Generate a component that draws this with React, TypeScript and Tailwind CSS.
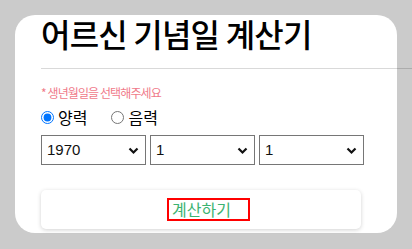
import React, { useState } from "react";

const Chevron = () => (
  <svg width="11" height="8" viewBox="0 0 11 8" className="pointer-events-none absolute right-[7px] top-[12px]">
    <path d="M1.5 1.5 L5.5 5.5 L9.5 1.5" fill="none" stroke="#111" strokeWidth="2.2" />
  </svg>
);

function Sel({ value, options }: { value: string; options: string[] }) {
  return (
    <div className="relative w-[105px] h-[30px]">
      <select
        defaultValue={value}
        className="appearance-none w-full h-full border border-[#767676] bg-white pl-[5px] text-[15px] outline-none text-[#111]"
        style={{ fontFamily: '"Liberation Sans", Arial, sans-serif' }}
      >
        {options.map((o) => (
          <option key={o}>{o}</option>
        ))}
      </select>
      <Chevron />
    </div>
  );
}

export default function App() {
  const [cal, setCal] = useState("solar");
  return (
    <div
      className="w-[412px] h-[249px] bg-[#cbcbcb] pt-[15px] pl-[15px] overflow-hidden"
      style={{ fontFamily: '"Noto Sans CJK KR", "Noto Sans", sans-serif' }}
    >
      <div className="w-[382px] h-[218px] bg-white rounded-[20px] pl-[26px] flex flex-col">
        <h1 className="text-[32px] leading-[32px] font-medium text-black mt-[2px] tracking-[-0.8px]">
          어르신 기념일 계산기
        </h1>
        <div className="w-[371px] h-px bg-black/15 mt-[19px] shrink-0" />
        <p className="text-[12px] leading-[14px] text-[#f07a8a] mt-[17px] tracking-[-0.9px]">
          * 생년월일을 선택해주세요
        </p>
        <div className="flex items-center mt-[7px] text-[16px] leading-[20px] text-black">
          <label className="flex items-center">
            <input
              type="radio"
              name="cal"
              checked={cal === "solar"}
              onChange={() => setCal("solar")}
              className="w-[13px] h-[13px] m-0 accent-[#0075ff]"
            />
            <span className="ml-[4px]">양력</span>
          </label>
          <label className="flex items-center ml-[24px]">
            <input
              type="radio"
              name="cal"
              checked={cal === "lunar"}
              onChange={() => setCal("lunar")}
              className="w-[13px] h-[13px] m-0"
            />
            <span className="ml-[4px]">음력</span>
          </label>
        </div>
        <div className="flex gap-[4px] mt-[8px]">
          <Sel value="1970" options={["1970", "1971"]} />
          <Sel value="1" options={["1", "2"]} />
          <Sel value="1" options={["1", "2"]} />
        </div>
        <button className="mt-[25px] w-[320px] h-[39px] bg-white rounded-[5px] shadow-[0_1px_4px_rgba(0,0,0,0.18)] flex items-center justify-center">
          <span className="border-2 border-[#ff0000] w-[83px] h-[23px] pl-[3px] text-left text-[16px] leading-[19px] text-[#3cb371] ml-[15px]">
            계산하기
          </span>
        </button>
      </div>
    </div>
  );
}
